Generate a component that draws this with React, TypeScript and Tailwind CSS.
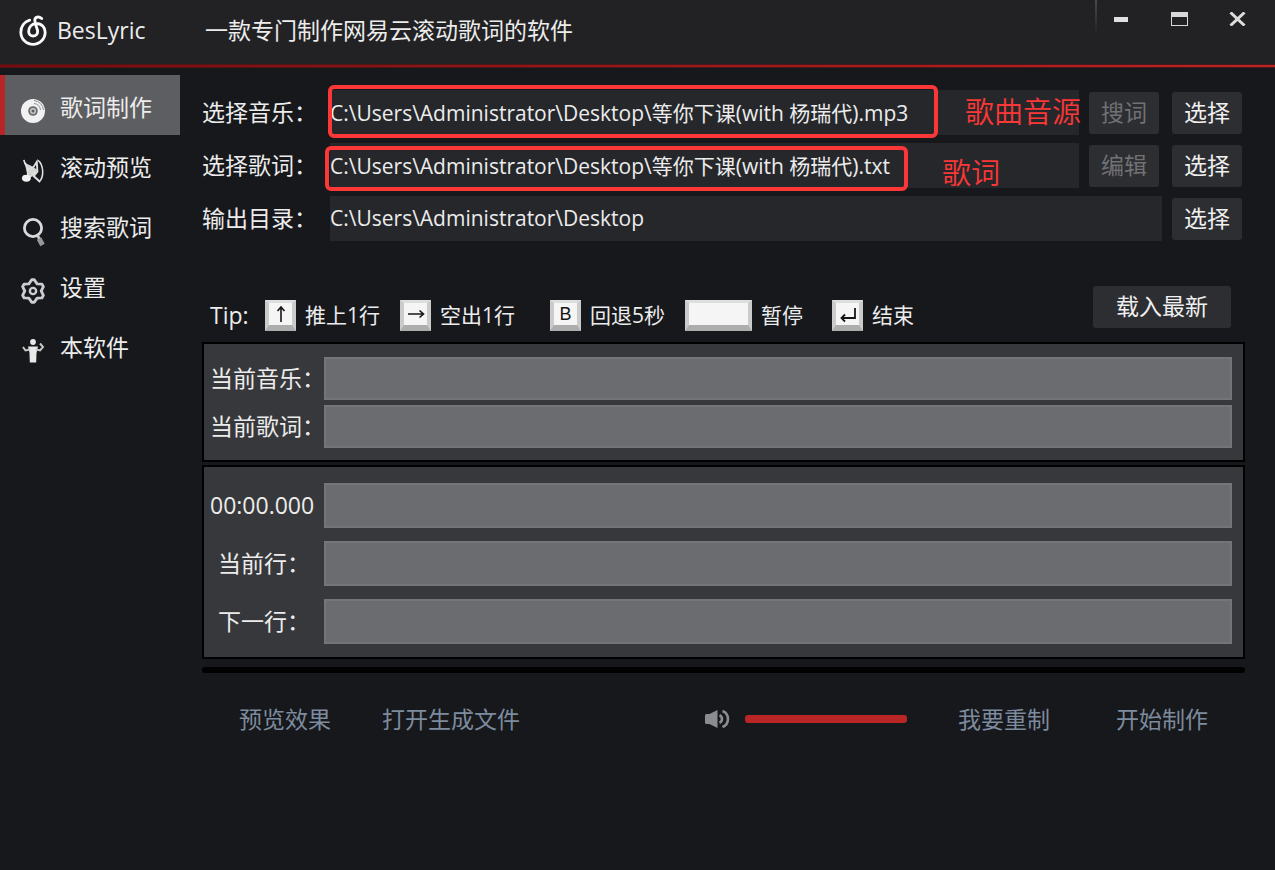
import React from 'react';

const LogoIcon = () => (
  <svg viewBox="0 0 84 92" className="h-[31px] w-7" fill="none" stroke="#fafafa" strokeWidth="8.5" strokeLinecap="round">
    <path d="M32 15C16 20 5.500 34 5.500 51A36.500 36.500 0 0 0 78.500 51C78.500 37 68 25 52 25C38 25 29 36 29 49A13.500 13.500 0 0 0 56 49C56 41 47.500 27 47.500 15C47.500 5 59 2 68 10" />
  </svg>
);

const DiscIcon = () => (
  <svg viewBox="0 0 24 24" className="size-6">
    <circle cx="12" cy="12" r="12" fill="#f1f1f1" />
    <path d="M13 1.5A10.5 10.5 0 0 1 22.5 11M13 4.5A7.5 7.5 0 0 1 19.5 11" fill="none" stroke="#8d8e90" strokeWidth="1" />
    <circle cx="12" cy="12" r="4.8" fill="#6b6c6f" />
    <circle cx="12" cy="12" r="3" fill="#c9c9c9" />
    <circle cx="12" cy="12" r="1.5" fill="#5d5e61" />
  </svg>
);

const PreviewIcon = () => (
  <svg viewBox="0 0 72 76" className="size-6" fill="none" stroke="#dedede">
    <path d="M7 3C12 13 18 17 27 20L50 34L42 54L28 50L20 56Z" fill="#d4d4d4" stroke="none" />
    <path d="M7 3C9 16 14 21 18 26L20 58" strokeWidth="5" />
    <path d="M19 35L38 25L48 9L50 40L38 54L58 72" strokeWidth="6" />
    <path d="M52 4C70 18 72 58 55 73" strokeWidth="5" />
    <path d="M26 56L44 42" strokeWidth="7" />
    <ellipse cx="15" cy="61" rx="14" ry="11" fill="#f2f2f2" stroke="none" />
  </svg>
);

const SearchIcon = () => (
  <svg viewBox="0 0 24 31" className="h-[31px] w-6" fill="none">
    <circle cx="12" cy="12" r="8.6" stroke="#dadada" strokeWidth="2.8" />
    <path d="M16.5 19.5L18.5 23" stroke="#cfcfcf" strokeWidth="2.6" />
    <path d="M18 22.5L21.5 29" stroke="#96979a" strokeWidth="5" />
  </svg>
);

const GearIcon = () => (
  <svg viewBox="0 0 24 24" className="size-[26px]" fill="none" stroke="#cdcdcf" strokeWidth="2.6" strokeLinejoin="round">
    <path d="M10.8 1.6H13.2L15.8 5.4L20.2 5.6L21.6 8L19.6 12L21.6 16L20.2 18.4L15.8 18.6L13.2 22.4H10.8L8.2 18.6L3.8 18.4L2.4 16L4.4 12L2.4 8L3.8 5.6L8.2 5.4Z" />
    <circle cx="12" cy="12" r="2.9" strokeWidth="2.2" />
  </svg>
);

const PersonIcon = () => (
  <svg viewBox="0 0 24 24" className="size-6" fill="#e8e8e8">
    <circle cx="12" cy="3" r="2.9" />
    <path d="M7 7.500H17L15.500 14L15.200 23.500H8.800L8.500 14Z" />
    <path d="M2 8L4.500 11.500L9 10.500M15 10.500L19 11.500L22 8L19 4.500" fill="none" stroke="#c8c8c8" strokeWidth="2" />
  </svg>
);

const SpeakerIcon = () => (
  <svg viewBox="0 0 25 20" className="h-5 w-[25px]" fill="#8b8c90">
    <path d="M0 6.5Q0 5 1.5 5H4.5L12.5 1V19L4.5 15H1.5Q0 15 0 13.5Z" />
    <path d="M14.5 6.3A4 4 0 0 1 14.5 13.7M17.5 2A8.6 8.6 0 0 1 17.5 18" fill="none" stroke="#8b8c90" strokeWidth="2.6" />
  </svg>
);

const menu = [
  { label: '歌词制作', icon: DiscIcon, active: true },
  { label: '滚动预览', icon: PreviewIcon },
  { label: '搜索歌词', icon: SearchIcon },
  { label: '设置', icon: GearIcon },
  { label: '本软件', icon: PersonIcon },
];

const buttonClass = 'h-[42px] shrink-0 rounded-[3px] bg-[#2d2e32] pb-[2px] text-[#f0f0f0] disabled:text-[#707174]';
const pathLabelClass = 'w-[118px] shrink-0 pb-[2px] whitespace-nowrap';
const pathClass = 'h-[45px] min-w-0 flex-1 bg-[#26272b] pb-[2px] text-[21px] text-[#ececec] outline-none';
const infoLabelClass = 'w-[114px] shrink-0 pb-[2px] whitespace-nowrap';
const infoClass = 'min-w-0 flex-1 border-2 border-[#747578] bg-[#6b6c6f] px-2 text-white outline-none';
const linkClass = 'text-[#7d8b9e]';

const Key = ({ children, wide }: { children?: React.ReactNode; wide?: boolean }) => (
  <kbd
    className={`flex h-[31px] shrink-0 items-center justify-center border-x-4 border-t-[3px] border-b-[6px] border-x-[#cbcbcb] border-t-[#dedede] border-b-[#adadad] bg-[#f5f5f5] font-['Liberation_Sans'] text-lg leading-none text-[#161616] ${
      wide ? 'w-[67px]' : 'w-[31px]'
    }`}
  >
    {children}
  </kbd>
);

const keyGlyph = 'h-[18px] w-[18px] shrink-0';

const App = () => {
  return (
    <div className="min-h-screen bg-[#17181c] font-['Open_Sans','Noto_Sans_CJK_SC',sans-serif] text-[23px] leading-8 text-[#ececec]">
      <header className="flex h-16 bg-[#222224]">
        <div className="flex w-[205px] items-center gap-[10px] pb-1 pl-[19px]">
          <LogoIcon />
          <span>BesLyric</span>
        </div>
        <h1 className="flex flex-1 items-center pb-1">一款专门制作网易云滚动歌词的软件</h1>
        <div className="flex items-start pr-[14px]">
          <div className="h-9 w-[2px] bg-linear-to-b from-[#4a4a4c] to-[#222224]" />
          <div className="flex gap-[10px]">
            <button type="button" aria-label="最小化" className="flex h-[38px] w-12 items-center justify-center">
              <span className="h-[5px] w-[14px] bg-[#e0e0e0]" />
            </button>
            <button type="button" aria-label="最大化" className="flex h-[38px] w-12 items-center justify-center">
              <span className="h-[14px] w-[17px] border border-t-[5px] border-[#d8d8d8]" />
            </button>
            <button type="button" aria-label="关闭" className="flex h-[38px] w-12 items-center justify-center">
              <svg viewBox="0 0 17 14" className="h-[14px] w-[17px]" stroke="#dcdcdc" strokeWidth="3">
                <path d="M1.5 0.5L15.5 13.5M15.5 0.5L1.5 13.5" />
              </svg>
            </button>
          </div>
        </div>
      </header>
      <div className="h-1 border-y border-[#4c1719] bg-linear-to-r from-[#79090c] to-[#ba2526]" />

      <div className="flex">
        <nav className="w-[180px] shrink-0 pt-[7px]">
          {menu.map(({ label, icon: Icon, active }) => (
            <a
              key={label}
              href="#"
              className={`flex h-[60px] items-center border-l-[5px] ${
                active ? 'border-[#b82526] bg-[#5d5e61]' : 'border-transparent'
              }`}
            >
              <span className="flex w-[55px] shrink-0 items-center justify-center pt-3">
                <Icon />
              </span>
              <span className="pt-1">{label}</span>
            </a>
          ))}
        </nav>

        <main className="min-w-0 flex-1 pt-[22px] pr-[30px] pl-[22px]">
          <section className="flex flex-col gap-2 pr-[3px]">
            <div className="relative flex items-center gap-[10px]">
              <label htmlFor="music" className={pathLabelClass}>选择音乐：</label>
              <input id="music" className={pathClass} defaultValue="C:\Users\Administrator\Desktop\等你下课(with 杨瑞代).mp3" />
              <button type="button" disabled className={`${buttonClass} w-[70px]`}>搜词</button>
              <button type="button" className={`${buttonClass} ml-[3px] w-[70px]`}>选择</button>
              <div className="pointer-events-none absolute -top-[5px] left-[126px] h-[53px] w-[610px] rounded-md border-4 border-[#fb3737]" />
              <span className="pointer-events-none absolute top-[6px] left-[763px] text-[29px] font-[350] text-[#fb3737]">歌曲音源</span>
            </div>
            <div className="relative flex items-center gap-[10px]">
              <label htmlFor="lyric" className={pathLabelClass}>选择歌词：</label>
              <input id="lyric" className={pathClass} defaultValue="C:\Users\Administrator\Desktop\等你下课(with 杨瑞代).txt" />
              <button type="button" disabled className={`${buttonClass} w-[70px]`}>编辑</button>
              <button type="button" className={`${buttonClass} ml-[3px] w-[70px]`}>选择</button>
              <div className="pointer-events-none absolute top-[3px] left-[123px] h-[45px] w-[583px] rounded-md border-4 border-[#fb3737]" />
              <span className="pointer-events-none absolute top-[14px] left-[740px] text-[29px] font-[350] text-[#fb3737]">歌词</span>
            </div>
            <div className="flex items-center gap-[10px]">
              <label htmlFor="output" className={pathLabelClass}>输出目录：</label>
              <input id="output" className={pathClass} defaultValue="C:\Users\Administrator\Desktop" />
              <button type="button" className={`${buttonClass} w-[70px]`}>选择</button>
            </div>
          </section>

          <section className="flex items-start pt-[45px] pr-[14px] pl-2">
            <div className="flex flex-1 items-center pt-[13px] text-[21px]">
              <span className="w-[55px] text-[23px]">Tip:</span>
              <div className="flex w-[135px] items-center gap-[9px]">
                <Key>
                  <svg viewBox="0 0 18 18" className={keyGlyph} fill="none" stroke="#161616" strokeWidth="1.6">
                    <path d="M9 17V2M5.5 6L9 2L12.5 6" />
                  </svg>
                </Key>
                推上1行
              </div>
              <div className="flex w-[150px] items-center gap-[9px]">
                <Key>
                  <svg viewBox="0 0 18 18" className={keyGlyph} fill="none" stroke="#161616" strokeWidth="1.6">
                    <path d="M1 9H16.5M12.5 5.5L16.5 9L12.5 12.5" />
                  </svg>
                </Key>
                空出1行
              </div>
              <div className="flex w-[135px] items-center gap-[9px]">
                <Key>B</Key>
                回退5秒
              </div>
              <div className="flex w-[147px] items-center gap-[9px]">
                <Key wide />
                暂停
              </div>
              <div className="flex items-center gap-[9px]">
                <Key>
                  <svg viewBox="0 0 18 18" className={keyGlyph} fill="none" stroke="#161616" strokeWidth="1.8">
                    <path d="M16 3V13H2.5M6 9.5L2.5 13L6 16.5" />
                  </svg>
                </Key>
                结束
              </div>
            </div>
            <button type="button" className={`${buttonClass} w-[138px]`}>载入最新</button>
          </section>

          <section className="mt-[11px] flex flex-col gap-[5px] border-2 border-black bg-[#37383b] pt-[13px] pr-[11px] pb-3 pl-[6px]">
            <div className="flex items-center">
              <label htmlFor="current-music" className={infoLabelClass}>当前音乐：</label>
              <input id="current-music" readOnly className={`${infoClass} h-[43px]`} />
            </div>
            <div className="flex items-center">
              <label htmlFor="current-lyric" className={infoLabelClass}>当前歌词：</label>
              <input id="current-lyric" readOnly className={`${infoClass} h-[43px]`} />
            </div>
          </section>

          <section className="mt-[3px] flex flex-col gap-[13px] border-2 border-black bg-[#37383b] pt-4 pr-[11px] pb-[13px] pl-[6px]">
            <div className="flex items-center">
              <label htmlFor="time" className={infoLabelClass}>00:00.000</label>
              <input id="time" readOnly className={`${infoClass} h-[45px]`} />
            </div>
            <div className="flex items-center">
              <label htmlFor="current-line" className={`${infoLabelClass} pl-2`}>当前行：</label>
              <input id="current-line" readOnly className={`${infoClass} h-[45px]`} />
            </div>
            <div className="flex items-center">
              <label htmlFor="next-line" className={`${infoLabelClass} pl-2`}>下一行：</label>
              <input id="next-line" readOnly className={`${infoClass} h-[45px]`} />
            </div>
          </section>

          <div role="progressbar" aria-label="播放进度" aria-valuenow={0} className="mt-2 h-[6px] rounded-full bg-black" />

          <footer className="flex items-center pt-[30px] pr-[37px] pl-[37px]">
            <button type="button" className={linkClass}>预览效果</button>
            <button type="button" className={`${linkClass} ml-[51px]`}>打开生成文件</button>
            <div className="flex flex-1 items-center justify-end gap-[15px] pr-[51px]">
              <SpeakerIcon />
              <input
                type="range"
                aria-label="音量"
                defaultValue={100}
                className="h-2 w-[162px] appearance-none rounded-[3px] bg-[#ba2526] [&::-webkit-slider-thumb]:size-0 [&::-webkit-slider-thumb]:appearance-none"
              />
            </div>
            <button type="button" className={linkClass}>我要重制</button>
            <button type="button" className={`${linkClass} ml-[66px]`}>开始制作</button>
          </footer>
        </main>
      </div>
    </div>
  );
};

export default App;
